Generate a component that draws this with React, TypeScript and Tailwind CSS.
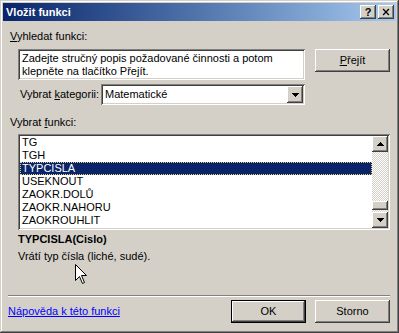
import { X } from 'lucide-react';

const raised =
  'shadow-[inset_-1px_-1px_#404040,inset_1px_1px_#ffffff,inset_-2px_-2px_#808080,inset_2px_2px_#d4d0c8]';
const sunken =
  'shadow-[inset_1px_1px_#808080,inset_-1px_-1px_#ffffff,inset_2px_2px_#404040,inset_-2px_-2px_#d4d0c8]';

const functions = ['TG', 'TGH', 'TYPCISLA', 'USEKNOUT', 'ZAOKR.DOLŮ', 'ZAOKR.NAHORU', 'ZAOKROUHLIT'];

const Arrow = ({ up }: { up?: boolean }) => (
  <svg width="7" height="4" viewBox="0 0 7 4" className={up ? '' : 'rotate-180'}>
    <path d="M3 0h1v1h1v1h1v1h1v1H0V3h1V2h1V1h1z" fill="#000" />
  </svg>
);

const App = () => {
  return (
    <div
      className={`relative flex h-[333px] w-[399px] flex-col bg-[#d4d0c8] p-[3px] font-['Liberation_Sans',Arial,sans-serif] text-[11px] leading-[13px] text-black shadow-[inset_-1px_-1px_#404040,inset_1px_1px_#d4d0c8,inset_-2px_-2px_#808080,inset_2px_2px_#ffffff]`}
    >
      {/* title bar */}
      <div className="flex h-[18px] items-center justify-between bg-gradient-to-r from-[#0a246a] to-[#a6caf0] pl-[3px] pr-[2px]">
        <span className="text-[11px] font-bold text-white">Vložit funkci</span>
        <div className="flex gap-[2px]">
          <div className={`flex h-[14px] w-[16px] items-center justify-center bg-[#d4d0c8] ${raised}`}>
            <span className="text-[11px] font-bold leading-none">?</span>
          </div>
          <div className={`flex h-[14px] w-[16px] items-center justify-center bg-[#d4d0c8] ${raised}`}>
            <X size={10} strokeWidth={3} strokeLinecap="square" />
          </div>
        </div>
      </div>

      {/* body */}
      <div className="relative flex flex-1 flex-col">
        <div className="ml-[7px] mt-[9px]">
          <span className="underline">V</span>yhledat funkci:
        </div>

        <div className="mt-[6px] flex items-start">
          <div className={`ml-[15px] h-[31px] w-[287px] bg-white px-[4px] pt-[3px] ${sunken}`}>
            Zadejte stručný popis požadované činnosti a potom
            <br />
            klepněte na tlačítko Přejít.
          </div>
          <button className={`ml-[10px] flex h-[23px] w-[75px] items-center justify-center bg-[#d4d0c8] ${raised}`}>
            <span>
              <span className="underline">P</span>řejít
            </span>
          </button>
        </div>

        <div className="mt-[4px] flex h-[21px] items-center">
          <div className="ml-[17px] w-[81px]">
            Vybrat <span className="underline">k</span>ategorii:
          </div>
          <div className={`flex h-[21px] w-[204px] items-center justify-between bg-white pl-[4px] pr-[2px] ${sunken}`}>
            <span>Matematické</span>
            <div className={`flex h-[17px] w-[16px] items-center justify-center bg-[#d4d0c8] ${raised}`}>
              <Arrow />
            </div>
          </div>
        </div>

        <div className="ml-[7px] mt-[11px]">
          Vybrat <span className="underline">f</span>unkci:
        </div>

        <div className={`ml-[15px] mt-[5px] flex h-[96px] w-[372px] bg-white p-[2px] ${sunken}`}>
          <div className="flex flex-1 flex-col">
            {functions.map((f) =>
              f === 'TYPCISLA' ? (
                <div
                  key={f}
                  className="h-[13px] bg-[#0a246a] pl-[2px] text-white outline-1 -outline-offset-1 outline-dotted outline-[#e6cf7a]"
                >
                  {f}
                </div>
              ) : (
                <div key={f} className="h-[13px] pl-[2px]">
                  {f}
                </div>
              )
            )}
          </div>
          <div className="flex w-[16px] flex-col">
            <div className={`flex h-[16px] items-center justify-center bg-[#d4d0c8] ${raised}`}>
              <Arrow up />
            </div>
            <div className="flex flex-1 flex-col bg-[repeating-conic-gradient(#d4d0c8_0_25%,#ffffff_0_50%)] bg-[length:2px_2px]">
              <div className="h-[49px]" />
              <div className={`h-[9px] bg-[#d4d0c8] ${raised}`} />
            </div>
            <div className={`flex h-[16px] items-center justify-center bg-[#d4d0c8] ${raised}`}>
              <Arrow />
            </div>
          </div>
        </div>

        <div className="ml-[15px] mt-[3px] font-bold">TYPCISLA(Cislo)</div>
        <div className="ml-[15px] mt-[4px]">Vrátí typ čísla (liché, sudé).</div>

        <div className="mt-auto ml-[5px] h-[2px] w-[382px] border-t border-b border-t-[#808080] border-b-white" />

        <div className="mb-[7px] mt-[3px] flex h-[23px] items-center pr-[6px]">
          <a className="ml-[5px] text-[#0000ff] underline">Nápověda k této funkci</a>
          <button className={`ml-auto flex h-[23px] w-[75px] items-center justify-center border border-black bg-[#d4d0c8] ${raised}`}>
            OK
          </button>
          <button className={`ml-[9px] flex h-[23px] w-[75px] items-center justify-center bg-[#d4d0c8] ${raised}`}>
            Storno
          </button>
        </div>

        {/* mouse pointer */}
        <svg className="absolute left-[72px] top-[243px]" width="13" height="21" viewBox="0 0 13 21">
          <path
            d="M0.5 0.5V16.5L4.5 12.5L7.5 19.5L9.5 18.5L6.5 11.5H11.5Z"
            fill="#fff"
            stroke="#000"
            strokeWidth="1"
            strokeLinejoin="miter"
          />
        </svg>
      </div>
    </div>
  );
};

export default App;
